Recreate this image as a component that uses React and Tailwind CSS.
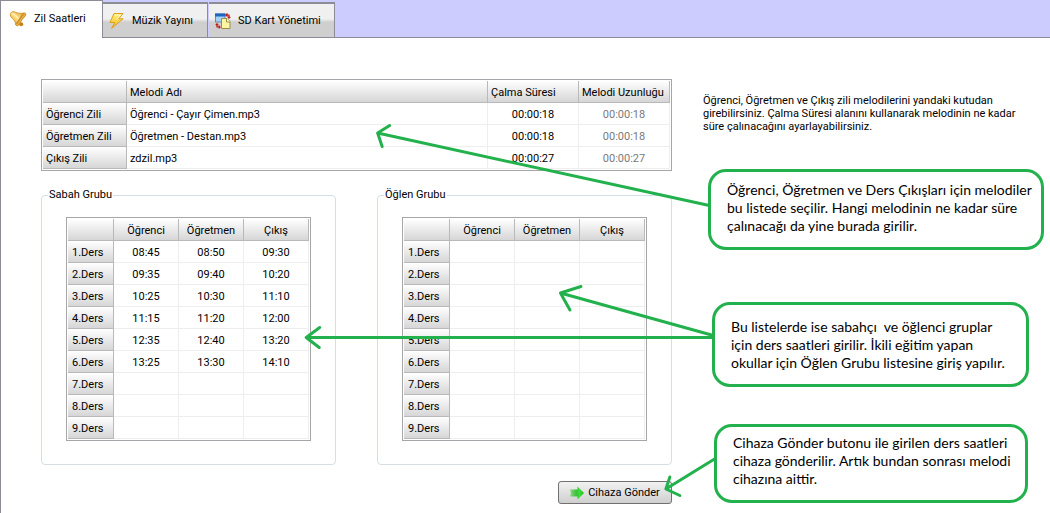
import React, { useState } from 'react';

const TABS = [
  { id: 'bells', label: 'Zil Saatleri', Icon: BellIcon },
  { id: 'music', label: 'Müzik Yayını', Icon: BoltIcon },
  { id: 'sdcard', label: 'SD Kart Yönetimi', Icon: CardIcon },
];

const MELODIES = [
  { bell: 'Öğrenci Zili', file: 'Öğrenci - Çayır Çimen.mp3', play: '00:00:18', length: '00:00:18' },
  { bell: 'Öğretmen Zili', file: 'Öğretmen - Destan.mp3', play: '00:00:18', length: '00:00:18' },
  { bell: 'Çıkış Zili', file: 'zdzil.mp3', play: '00:00:27', length: '00:00:27' },
];

const MORNING = [
  ['08:45', '08:50', '09:30'],
  ['09:35', '09:40', '10:20'],
  ['10:25', '10:30', '11:10'],
  ['11:15', '11:20', '12:00'],
  ['12:35', '12:40', '13:20'],
  ['13:25', '13:30', '14:10'],
];

const LESSONS = [1, 2, 3, 4, 5, 6, 7, 8, 9];

// Shared cell looks
const HEAD = 'h-[22px] p-0 pt-[2px] font-normal whitespace-nowrap bg-linear-to-b from-white to-[#d6d6d6] border-r border-b border-[#b9b9b9]';
const CELL = 'h-[22px] p-0 pt-[2px] border-r border-b border-[#eeeeee]';

function BellIcon() {
  return (
    <svg className="w-[18px] h-[18px] shrink-0" viewBox="0 0 18 18" aria-hidden="true">
      <defs>
        <linearGradient id="bell" x1="0" y1="1" x2="1" y2="0">
          <stop offset="0" stopColor="#d9921c" />
          <stop offset="0.5" stopColor="#ffe08a" />
          <stop offset="1" stopColor="#dc9a26" />
        </linearGradient>
      </defs>
      <circle cx="12.2" cy="14.2" r="2" fill="#c98018" />
      <path
        d="M1.600 3.400C2.400 1.500 4.600 1.200 6.500 2.200 9 3.500 12 3.400 15 3.200L7 14.800C6.400 12 5.200 10 3.200 8.200 1.600 6.800.9 5 1.600 3.400z"
        fill="url(#bell)"
        stroke="#c98a1c"
        strokeWidth="0.8"
      />
      <path
        d="M14.600 3c1.400-.4 2.600.5 2.200 1.900-.4 1.300-2.300 2.800-3.800 4.800-1.500 2-2.200 4.300-3.400 5.500-1 1-2.700.6-3-.7z"
        fill="#e9b044"
        stroke="#c0801a"
        strokeWidth="0.8"
      />
      <path d="M14.800 4.600c-2.600 2.400-5.200 5.800-6.600 9" stroke="#c98a20" strokeWidth="1" fill="none" />
      <path d="M3.200 3.800C5 4 8.500 6.500 9.500 8.500" stroke="#fff3c4" strokeWidth="1.300" fill="none" />
    </svg>
  );
}

function BoltIcon() {
  return (
    <svg className="w-[16px] h-[18px] shrink-0" viewBox="0 0 16 18" aria-hidden="true">
      <defs>
        <linearGradient id="bolt" x1="0" y1="0" x2="0" y2="1">
          <stop offset="0" stopColor="#fff27a" />
          <stop offset="1" stopColor="#f2b51d" />
        </linearGradient>
      </defs>
      <path
        d="M5 1.500h9L9.800 6.800h4.300L2.500 16.500l3.400-6H1z"
        fill="url(#bolt)"
        stroke="#dfa01f"
        strokeWidth="1"
        strokeLinejoin="round"
      />
      <path d="M6 3h5.500L7.500 7.500" stroke="#fffbd0" strokeWidth="1" fill="none" />
    </svg>
  );
}

function CardIcon() {
  return (
    <svg className="w-[16px] h-[16px] shrink-0" viewBox="0 0 16 16" aria-hidden="true">
      <rect x="0.500" y="1" width="9.500" height="8" fill="#a9d3f5" stroke="#6f87a8" />
      <rect x="0" y="0.500" width="10.500" height="3" fill="#1f66c0" />
      <path d="M6.500 5.500h5.500l3 3v7H6.500z" fill="#fbf5a4" stroke="#9a8f4a" />
      <path d="M11.500 5.500v3.500H15" fill="#fffde0" stroke="#9a8f4a" />
      <path d="M11 2h3v3M12.500 .5L11 2l1.500 1.500M12.800 3.800L14 5.200l1.300-1.400" stroke="#c01818" strokeWidth="1.200" fill="none" />
      <path d="M5 14H2v-3M.8 12L2 10.800 3.200 12M3.700 12.700L5 14l-1.300 1.300" stroke="#c01818" strokeWidth="1.200" fill="none" />
    </svg>
  );
}

function SendIcon() {
  return (
    <svg className="w-[14px] h-[14px] shrink-0" viewBox="0 0 14 14" aria-hidden="true">
      <defs>
        <linearGradient id="send" x1="0" y1="0" x2="1" y2="0">
          <stop offset="0" stopColor="#8ad986" />
          <stop offset="0.450" stopColor="#3bbf3b" />
          <stop offset="0.700" stopColor="#35e035" />
          <stop offset="1" stopColor="#1fb524" />
        </linearGradient>
      </defs>
      <path d="M0 3.500h7.500V0.500L14 7l-6.500 6.500V10.500H0L1 7z" fill="url(#send)" />
    </svg>
  );
}

function MelodyTable() {
  return (
    <div className="border border-[#a5a5aa] p-px">
      <table className="w-full table-fixed border-separate border-spacing-0">
        <thead>
          <tr>
            <th className={`${HEAD} w-[84px]`}></th>
            <th className={`${HEAD} pl-[3px] text-left`}>Melodi Adı</th>
            <th className={`${HEAD} w-[91px] pl-[3px] text-left`}>Çalma Süresi</th>
            <th className={`${HEAD} w-[91px] pl-[3px] text-left`}>Melodi Uzunluğu</th>
          </tr>
        </thead>
        <tbody>
          {MELODIES.map((m) => (
            <tr key={m.bell}>
              <th scope="row" className={`${HEAD} pl-[3px] text-left`}>{m.bell}</th>
              <td className={`${CELL} pl-[3px]`}>{m.file}</td>
              <td className={`${CELL} text-center`}>{m.play}</td>
              <td className={`${CELL} text-center text-[#7a7a7a]`}>{m.length}</td>
            </tr>
          ))}
        </tbody>
      </table>
    </div>
  );
}

function LessonGroup({ title, times }) {
  return (
    <fieldset className="flex-1 min-w-0 rounded-[4px] border border-[#d5dfe5] px-6 pb-[23px]">
      <legend className="-ml-[18px] px-px leading-4">{title}</legend>
      <div className="mt-[14px] border border-[#a5a5aa] p-px">
        <table className="w-full table-fixed border-separate border-spacing-0">
          <thead>
            <tr>
              <th className={`${HEAD} w-[46px]`}></th>
              <th className={HEAD}>Öğrenci</th>
              <th className={HEAD}>Öğretmen</th>
              <th className={HEAD}>Çıkış</th>
            </tr>
          </thead>
          <tbody>
            {LESSONS.map((n, i) => (
              <tr key={n}>
                <th scope="row" className={`${HEAD} pl-1 text-left`}>{n}.Ders</th>
                {[0, 1, 2].map((c) => (
                  <td key={c} className={`${CELL} text-center`}>{times[i]?.[c]}</td>
                ))}
              </tr>
            ))}
          </tbody>
        </table>
      </div>
    </fieldset>
  );
}

function Callout({ lines, className }) {
  return (
    <aside
      className={`rounded-[18px] border-3 border-[#22b14c] bg-white font-['Lato',sans-serif] text-[14px] leading-[18px] whitespace-pre ${className}`}
    >
      {lines.map((line) => (
        <p key={line}>{line}</p>
      ))}
    </aside>
  );
}

// Green pointers from the notes to the parts of the form they explain
function Pointers() {
  return (
    <svg
      className="absolute inset-0 w-full h-full pointer-events-none"
      viewBox="0 0 1050 513"
      preserveAspectRatio="none"
      fill="none"
      stroke="#22b14c"
      strokeWidth="3"
      strokeLinecap="round"
      strokeLinejoin="round"
      aria-hidden="true"
    >
      <path d="M709 205.500L377 133M389 125.500L377 133l4.500 13.500" />
      <path d="M713 335.500L560 293M580.500 286.500L560 293l9.500 17" />
      <path d="M713 337.500H305.500M319 327.500L305.500 337.500l13 10" />
      <path d="M715 458.500L665.500 489M669.500 477L665.500 489l14 6.500" />
    </svg>
  );
}

export default function App() {
  const [activeTab, setActiveTab] = useState('bells');

  return (
    <div className="relative min-h-screen bg-white border-l border-[#8c8c96] font-['Roboto',sans-serif] text-[11px] leading-[13px] text-black">
      <nav role="tablist" className="flex items-end h-[38px] bg-[#ccccff] shadow-[inset_0_-1px_0_#8c8c96]">
        {TABS.map(({ id, label, Icon }) =>
          id === activeTab ? (
            <button
              key={id}
              type="button"
              role="tab"
              aria-selected="true"
              className="flex items-center gap-[7px] h-[38px] min-w-[102px] pl-2 pr-2 pb-[2px] bg-white border-t border-r border-[#8c8c96] whitespace-nowrap"
            >
              <Icon />
              {label}
            </button>
          ) : (
            <button
              key={id}
              type="button"
              role="tab"
              aria-selected="false"
              onClick={() => setActiveTab(id)}
              className="flex items-center gap-[7px] h-9 min-w-[105px] pl-[6px] pr-[13px] mr-px bg-linear-to-b from-[#f0f0f0] from-45% to-[#cfcfcf] to-55% border-t-2 border-b border-r border-[#8c8c96] whitespace-nowrap"
            >
              <Icon />
              {label}
            </button>
          )
        )}
      </nav>

      <main className="flex gap-[31px] pt-[41px] pl-10 pr-[6px]">
        <div className="flex-1 min-w-0">
          <MelodyTable />

          <div className="flex gap-[41px] mt-4">
            <LessonGroup title="Sabah Grubu" times={MORNING} />
            <LessonGroup title="Öğlen Grubu" times={[]} />
          </div>

          <div className="flex justify-end mt-4">
            <button
              type="button"
              className="flex items-center justify-center gap-1 h-[23px] w-[114px] rounded-[3px] border border-[#707070] bg-linear-to-b from-[#f2f2f2] to-[#cfcfcf] whitespace-nowrap"
            >
              <SendIcon />
              Cihaza Gönder
            </button>
          </div>
        </div>

        <div className="w-[341px] shrink-0 flex flex-col items-start">
          <p className="mt-[15px] whitespace-pre-line">
            {`Öğrenci, Öğretmen ve Çıkış zili melodilerini yandaki kutudan
            girebilirsiniz. Çalma Süresi alanını kullanarak melodinin ne kadar
            süre çalınacağını ayarlayabilirsiniz.`}
          </p>
          <Callout
            className="ml-[5px] mt-9 w-[336px] pl-4 pt-[9px] pb-3"
            lines={[
              'Öğrenci, Öğretmen ve Ders Çıkışları için melodiler',
              'bu listede seçilir. Hangi melodinin ne kadar süre',
              'çalınacağı da yine burada girilir.',
            ]}
          />
          <Callout
            className="ml-[9px] mt-[52px] w-[317px] pl-4 pt-[13px] pb-3"
            lines={[
              'Bu listelerde ise sabahçı  ve öğlenci gruplar',
              'için ders saatleri girilir. İkili eğitim yapan',
              'okullar için Öğlen Grubu listesine giriş yapılır.',
            ]}
          />
          <Callout
            className="ml-[11px] mt-[37px] w-[314px] pl-4 pt-[7px] pb-3"
            lines={[
              'Cihaza Gönder butonu ile girilen ders saatleri',
              'cihaza gönderilir. Artık bundan sonrası melodi',
              'cihazına aittir.',
            ]}
          />
        </div>
      </main>

      <Pointers />
    </div>
  );
}
